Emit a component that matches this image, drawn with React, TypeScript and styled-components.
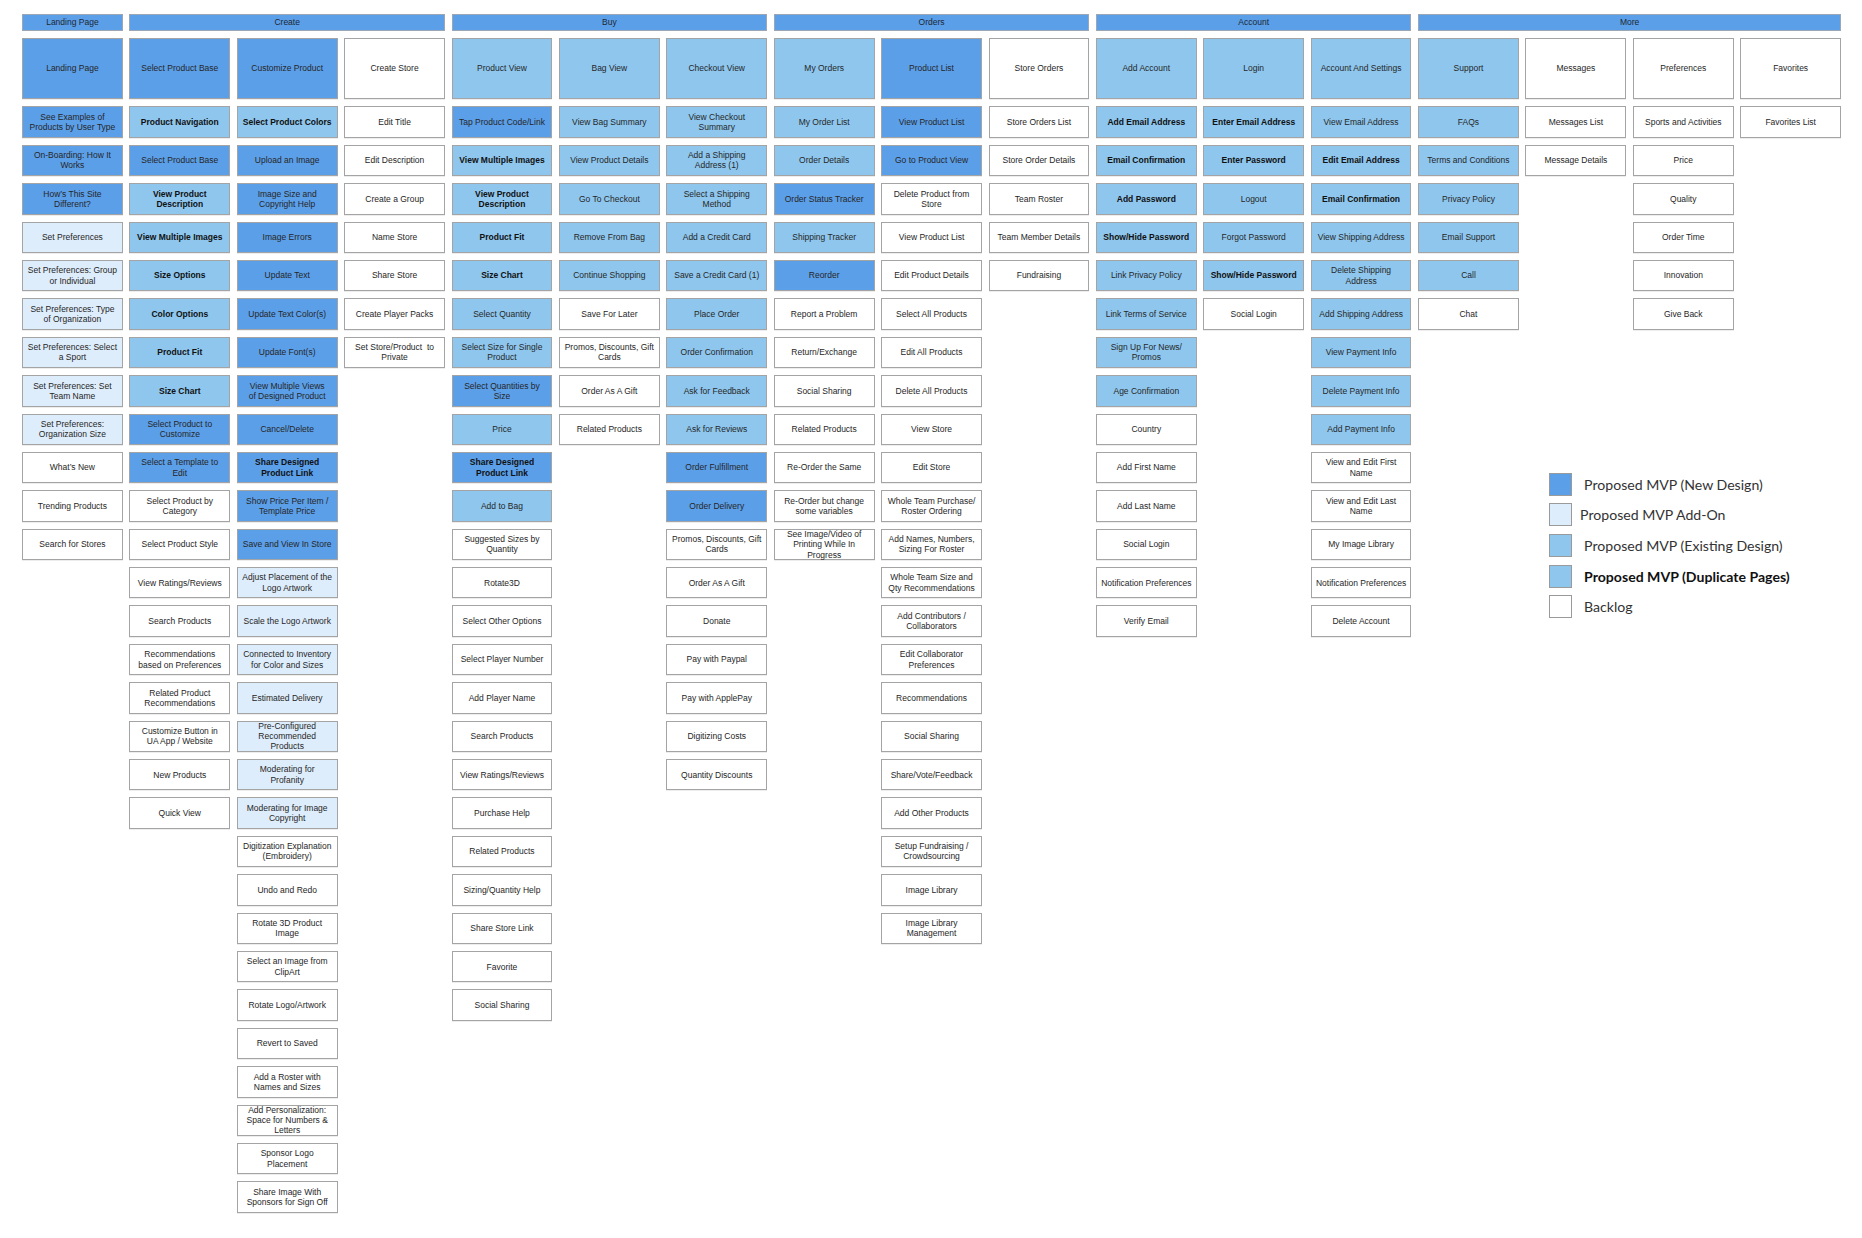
import React from 'react';
import styled, { createGlobalStyle } from 'styled-components';

type Kind = 'new' | 'addon' | 'existing' | 'backlog';

interface Item {
  label: string;
  kind: Kind;
  bold: boolean;
}

interface ColumnData {
  head: string;
  items: string[];
}

interface SectionData {
  title: string;
  columns: ColumnData[];
  legend?: boolean;
}

const fills: Record<Kind, string> = {
  new: '#5b9fe9',
  addon: '#deedfb',
  existing: '#8ec6ee',
  backlog: '#ffffff',
};

const COL_W = 100.8;
const COL_GAP = 6.6;
const ROW_GAP = 7;

// "n|label" -> kind by letter, upper case letter means bold text
const codes: Record<string, Kind> = { n: 'new', a: 'addon', e: 'existing', b: 'backlog' };

const parse = (s: string): Item => {
  const [code, label] = s.split('|');
  return { label, kind: codes[code.toLowerCase()], bold: code !== code.toLowerCase() };
};

const sections: SectionData[] = [
  {
    title: 'Landing Page',
    columns: [
      {
        head: 'n|Landing Page',
        items: [
          'n|See Examples of\nProducts by User Type',
          'n|On-Boarding: How It\nWorks',
          'n|How’s This Site\nDifferent?',
          'a|Set Preferences',
          'a|Set Preferences: Group\nor Individual',
          'a|Set Preferences: Type\nof Organization',
          'a|Set Preferences: Select\na Sport',
          'a|Set Preferences: Set\nTeam Name',
          'a|Set Preferences:\nOrganization Size',
          'b|What’s New',
          'b|Trending Products',
          'b|Search for Stores',
        ],
      },
    ],
  },
  {
    title: 'Create',
    columns: [
      {
        head: 'n|Select Product Base',
        items: [
          'E|Product Navigation',
          'n|Select Product Base',
          'E|View Product\nDescription',
          'E|View Multiple Images',
          'E|Size Options',
          'E|Color Options',
          'E|Product Fit',
          'E|Size Chart',
          'n|Select Product to\nCustomize',
          'n|Select a Template to\nEdit',
          'b|Select Product by\nCategory',
          'b|Select Product Style',
          'b|View Ratings/Reviews',
          'b|Search Products',
          'b|Recommendations\nbased on Preferences',
          'b|Related Product\nRecommendations',
          'b|Customize Button in\nUA App / Website',
          'b|New Products',
          'b|Quick View',
        ],
      },
      {
        head: 'n|Customize Product',
        items: [
          'E|Select Product Colors',
          'n|Upload an Image',
          'n|Image Size and\nCopyright Help',
          'n|Image Errors',
          'n|Update Text',
          'n|Update Text Color(s)',
          'n|Update Font(s)',
          'n|View Multiple Views\nof Designed Product',
          'n|Cancel/Delete',
          'N|Share Designed\nProduct Link',
          'n|Show Price Per Item /\nTemplate Price',
          'n|Save and View In Store',
          'a|Adjust Placement of the\nLogo Artwork',
          'a|Scale the Logo Artwork',
          'a|Connected to Inventory\nfor Color and Sizes',
          'a|Estimated Delivery',
          'a|Pre-Configured\nRecommended\nProducts',
          'a|Moderating for\nProfanity',
          'a|Moderating for Image\nCopyright',
          'b|Digitization Explanation\n(Embroidery)',
          'b|Undo and Redo',
          'b|Rotate 3D Product\nImage',
          'b|Select an Image from\nClipArt',
          'b|Rotate Logo/Artwork',
          'b|Revert to Saved',
          'b|Add a Roster with\nNames and Sizes',
          'b|Add Personalization:\nSpace for Numbers &\nLetters',
          'b|Sponsor Logo\nPlacement',
          'b|Share Image With\nSponsors for Sign Off',
        ],
      },
      {
        head: 'b|Create Store',
        items: [
          'b|Edit Title',
          'b|Edit Description',
          'b|Create a Group',
          'b|Name Store',
          'b|Share Store',
          'b|Create Player Packs',
          'b|Set Store/Product  to\nPrivate',
        ],
      },
    ],
  },
  {
    title: 'Buy',
    columns: [
      {
        head: 'e|Product View',
        items: [
          'n|Tap Product Code/Link',
          'E|View Multiple Images',
          'E|View Product\nDescription',
          'E|Product Fit',
          'E|Size Chart',
          'e|Select Quantity',
          'e|Select Size for Single\nProduct',
          'n|Select Quantities by\nSize',
          'e|Price',
          'N|Share Designed\nProduct Link',
          'e|Add to Bag',
          'b|Suggested Sizes by\nQuantity',
          'b|Rotate3D',
          'b|Select Other Options',
          'b|Select Player Number',
          'b|Add Player Name',
          'b|Search Products',
          'b|View Ratings/Reviews',
          'b|Purchase Help',
          'b|Related Products',
          'b|Sizing/Quantity Help',
          'b|Share Store Link',
          'b|Favorite',
          'b|Social Sharing',
        ],
      },
      {
        head: 'e|Bag View',
        items: [
          'e|View Bag Summary',
          'e|View Product Details',
          'e|Go To Checkout',
          'e|Remove From Bag',
          'e|Continue Shopping',
          'b|Save For Later',
          'b|Promos, Discounts, Gift\nCards',
          'b|Order As A Gift',
          'b|Related Products',
        ],
      },
      {
        head: 'e|Checkout View',
        items: [
          'e|View Checkout\nSummary',
          'e|Add a Shipping\nAddress (1)',
          'e|Select a Shipping\nMethod',
          'e|Add a Credit Card',
          'e|Save a Credit Card (1)',
          'e|Place Order',
          'e|Order Confirmation',
          'e|Ask for Feedback',
          'e|Ask for Reviews',
          'n|Order Fulfillment',
          'n|Order Delivery',
          'b|Promos, Discounts, Gift\nCards',
          'b|Order As A Gift',
          'b|Donate',
          'b|Pay with Paypal',
          'b|Pay with ApplePay',
          'b|Digitizing Costs',
          'b|Quantity Discounts',
        ],
      },
    ],
  },
  {
    title: 'Orders',
    columns: [
      {
        head: 'e|My Orders',
        items: [
          'e|My Order List',
          'e|Order Details',
          'n|Order Status Tracker',
          'e|Shipping Tracker',
          'n|Reorder',
          'b|Report a Problem',
          'b|Return/Exchange',
          'b|Social Sharing',
          'b|Related Products',
          'b|Re-Order the Same',
          'b|Re-Order but change\nsome variables',
          'b|See Image/Video of\nPrinting While In\nProgress',
        ],
      },
      {
        head: 'n|Product List',
        items: [
          'n|View Product List',
          'n|Go to Product View',
          'b|Delete Product from\nStore',
          'b|View Product List',
          'b|Edit Product Details',
          'b|Select All Products',
          'b|Edit All Products',
          'b|Delete All Products',
          'b|View Store',
          'b|Edit Store',
          'b|Whole Team Purchase/\nRoster Ordering',
          'b|Add Names, Numbers,\nSizing For Roster',
          'b|Whole Team Size and\nQty Recommendations',
          'b|Add Contributors /\nCollaborators',
          'b|Edit Collaborator\nPreferences',
          'b|Recommendations',
          'b|Social Sharing',
          'b|Share/Vote/Feedback',
          'b|Add Other Products',
          'b|Setup Fundraising /\nCrowdsourcing',
          'b|Image Library',
          'b|Image Library\nManagement',
        ],
      },
      {
        head: 'b|Store Orders',
        items: [
          'b|Store Orders List',
          'b|Store Order Details',
          'b|Team Roster',
          'b|Team Member Details',
          'b|Fundraising',
        ],
      },
    ],
  },
  {
    title: 'Account',
    columns: [
      {
        head: 'e|Add Account',
        items: [
          'E|Add Email Address',
          'E|Email Confirmation',
          'E|Add Password',
          'E|Show/Hide Password',
          'e|Link Privacy Policy',
          'e|Link Terms of Service',
          'e|Sign Up For News/\nPromos',
          'e|Age Confirmation',
          'b|Country',
          'b|Add First Name',
          'b|Add Last Name',
          'b|Social Login',
          'b|Notification Preferences',
          'b|Verify Email',
        ],
      },
      {
        head: 'e|Login',
        items: [
          'E|Enter Email Address',
          'E|Enter Password',
          'e|Logout',
          'e|Forgot Password',
          'E|Show/Hide Password',
          'b|Social Login',
        ],
      },
      {
        head: 'e|Account And Settings',
        items: [
          'e|View Email Address',
          'E|Edit Email Address',
          'E|Email Confirmation',
          'e|View Shipping Address',
          'e|Delete Shipping\nAddress',
          'e|Add Shipping Address',
          'e|View Payment Info',
          'e|Delete Payment Info',
          'e|Add Payment Info',
          'b|View and Edit First\nName',
          'b|View and Edit Last\nName',
          'b|My Image Library',
          'b|Notification Preferences',
          'b|Delete Account',
        ],
      },
    ],
  },
  {
    title: 'More',
    legend: true,
    columns: [
      {
        head: 'e|Support',
        items: [
          'e|FAQs',
          'e|Terms and Conditions',
          'e|Privacy Policy',
          'e|Email Support',
          'e|Call',
          'b|Chat',
        ],
      },
      {
        head: 'b|Messages',
        items: ['b|Messages List', 'b|Message Details'],
      },
      {
        head: 'b|Preferences',
        items: [
          'b|Sports and Activities',
          'b|Price',
          'b|Quality',
          'b|Order Time',
          'b|Innovation',
          'b|Give Back',
        ],
      },
      {
        head: 'b|Favorites',
        items: ['b|Favorites List'],
      },
    ],
  },
];

const legendItems: { kind: Kind; label: string; bold?: boolean; shift?: number }[] = [
  { kind: 'new', label: 'Proposed MVP (New Design)' },
  { kind: 'addon', label: 'Proposed MVP Add-On', shift: -4 },
  { kind: 'existing', label: 'Proposed MVP (Existing Design)' },
  { kind: 'existing', label: 'Proposed MVP (Duplicate Pages)', bold: true },
  { kind: 'backlog', label: 'Backlog' },
];

const GlobalStyle = createGlobalStyle`
  html, body {
    margin: 0;
    padding: 0;
    background: #ffffff;
  }
  body {
    font-family: "Liberation Sans", Arial, Helvetica, sans-serif;
    color: #262626;
  }
`;

const Page = styled.div`
  display: flex;
  align-items: flex-start;
  gap: ${COL_GAP}px;
  box-sizing: border-box;
  width: 1862px;
  min-height: 1238px;
  padding: 14px 0 0 22px;
`;

const Section = styled.section`
  display: flex;
  flex-direction: column;
  gap: ${ROW_GAP}px;
`;

const SectionBar = styled.div`
  box-sizing: border-box;
  height: 16.7px;
  border: 1px solid #9ba7b5;
  background: ${fills.new};
  display: flex;
  align-items: center;
  justify-content: center;
  font-size: 8.5px;
  color: #1d2733;
`;

const Columns = styled.div`
  display: flex;
  align-items: flex-start;
  gap: ${COL_GAP}px;
`;

const Column = styled.div`
  width: ${COL_W}px;
  display: flex;
  flex-direction: column;
  gap: ${ROW_GAP}px;
`;

const Card = styled.div<{ $kind: Kind; $bold: boolean; $tall?: boolean }>`
  box-sizing: border-box;
  height: ${({ $tall }) => ($tall ? 61.7 : 31.4)}px;
  border: 1px solid #a4a4a4;
  box-shadow: 0 1px 0 rgba(0, 0, 0, 0.07);
  background: ${({ $kind }) => fills[$kind]};
  display: flex;
  align-items: center;
  justify-content: center;
  text-align: center;
  white-space: pre;
  font-size: 8.5px;
  line-height: 10.3px;
  font-weight: ${({ $bold }) => ($bold ? 700 : 400)};
  color: ${({ $bold }) => ($bold ? '#111111' : '#262626')};
`;

const Legend = styled.div`
  display: flex;
  flex-direction: column;
  gap: 7.7px;
  margin: 136px 0 0 131px;
`;

const LegendRow = styled.div`
  display: flex;
  align-items: center;
  gap: 12px;
`;

const Swatch = styled.div<{ $kind: Kind }>`
  box-sizing: border-box;
  width: 23px;
  height: 23px;
  flex: none;
  border: 1px solid #9a9a9a;
  background: ${({ $kind }) => fills[$kind]};
`;

const LegendLabel = styled.span<{ $bold?: boolean; $shift?: number }>`
  font-family: Lato, "Open Sans", sans-serif;
  font-size: 14.1px;
  white-space: nowrap;
  margin-left: ${({ $shift }) => $shift ?? 0}px;
  font-weight: ${({ $bold }) => ($bold ? 700 : 400)};
  color: ${({ $bold }) => ($bold ? '#111111' : '#333333')};
`;

function SiteColumn({ column }: { column: ColumnData }) {
  const head = parse(column.head);
  return (
    <Column>
      <Card $kind={head.kind} $bold={head.bold} $tall>
        {head.label}
      </Card>
      {column.items.map((raw, i) => {
        const item = parse(raw);
        return (
          <Card key={i} $kind={item.kind} $bold={item.bold}>
            {item.label}
          </Card>
        );
      })}
    </Column>
  );
}

export default function App() {
  return (
    <>
      <GlobalStyle />
      <Page>
        {sections.map((section) => (
          <Section key={section.title}>
            <SectionBar>{section.title}</SectionBar>
            <Columns>
              {section.columns.map((column) => (
                <SiteColumn key={column.head} column={column} />
              ))}
            </Columns>
            {section.legend && (
              <Legend>
                {legendItems.map((entry) => (
                  <LegendRow key={entry.label}>
                    <Swatch $kind={entry.kind} />
                    <LegendLabel $bold={entry.bold} $shift={entry.shift}>
                      {entry.label}
                    </LegendLabel>
                  </LegendRow>
                ))}
              </Legend>
            )}
          </Section>
        ))}
      </Page>
    </>
  );
}
